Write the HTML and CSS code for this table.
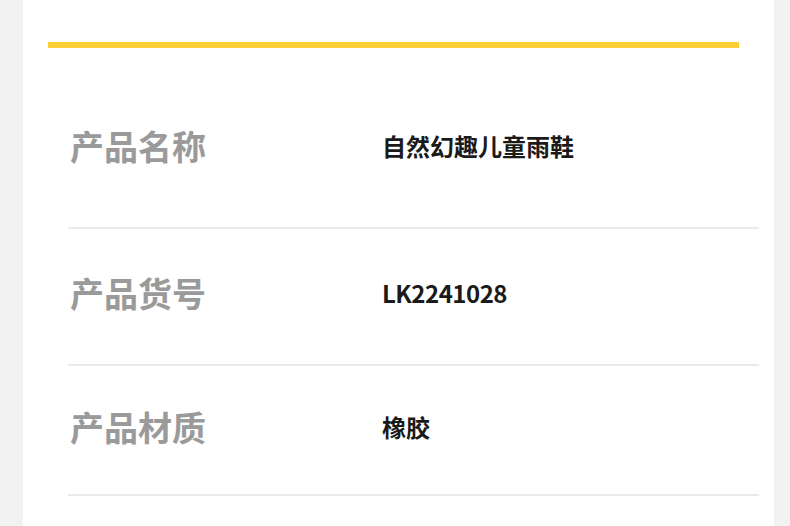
FILE: index.html
```html
<!DOCTYPE html>
<html lang="zh">
<head>
<meta charset="utf-8">
<link rel="stylesheet" href="styles.css">
</head>
<body>
<div class="page">
  <div class="card">
    <div class="bar"></div>
    <div class="table">
      <div class="row row-1">
        <div class="label">产品名称</div>
        <div class="value">自然幻趣儿童雨鞋</div>
      </div>
      <div class="row row-2">
        <div class="label">产品货号</div>
        <div class="value latin">LK2241028</div>
      </div>
      <div class="row row-3">
        <div class="label">产品材质</div>
        <div class="value">橡胶</div>
      </div>
    </div>
  </div>
</div>
</body>
</html>
```
FILE: styles.css
```css
html, body {
  margin: 0;
  padding: 0;
  background: #f2f2f2;
}
body {
  font-family: "Noto Sans CJK SC", "Noto Sans", sans-serif;
}
.page {
  padding: 0 16px 0 23px;
  height: 526px;
  overflow: hidden;
}
.card {
  background: #ffffff;
  height: 100%;
  padding-top: 42px;
  box-sizing: border-box;
}
.bar {
  margin-left: 25px;
  width: 691px;
  height: 6px;
  background: #fccf36;
}
.table {
  margin-left: 45px;
  width: 691px;
}
.row {
  display: flex;
  align-items: center;
  border-bottom: 2px solid #eaeaea;
  box-sizing: border-box;
}
.row-1 {
  padding: 78px 0 61px;
}
.row-2 {
  padding: 44px 0 51px;
}
.row-3 {
  padding: 41px 0 47px;
}
.label {
  width: 314px;
  padding-left: 2px;
  box-sizing: border-box;
  font-size: 34px;
  line-height: 40px;
  font-weight: 700;
  color: #9a9a9a;
}
.value {
  font-size: 24px;
  line-height: 40px;
  font-weight: 700;
  color: #1a1a1a;
}
.latin {
  letter-spacing: -0.5px;
}
```
